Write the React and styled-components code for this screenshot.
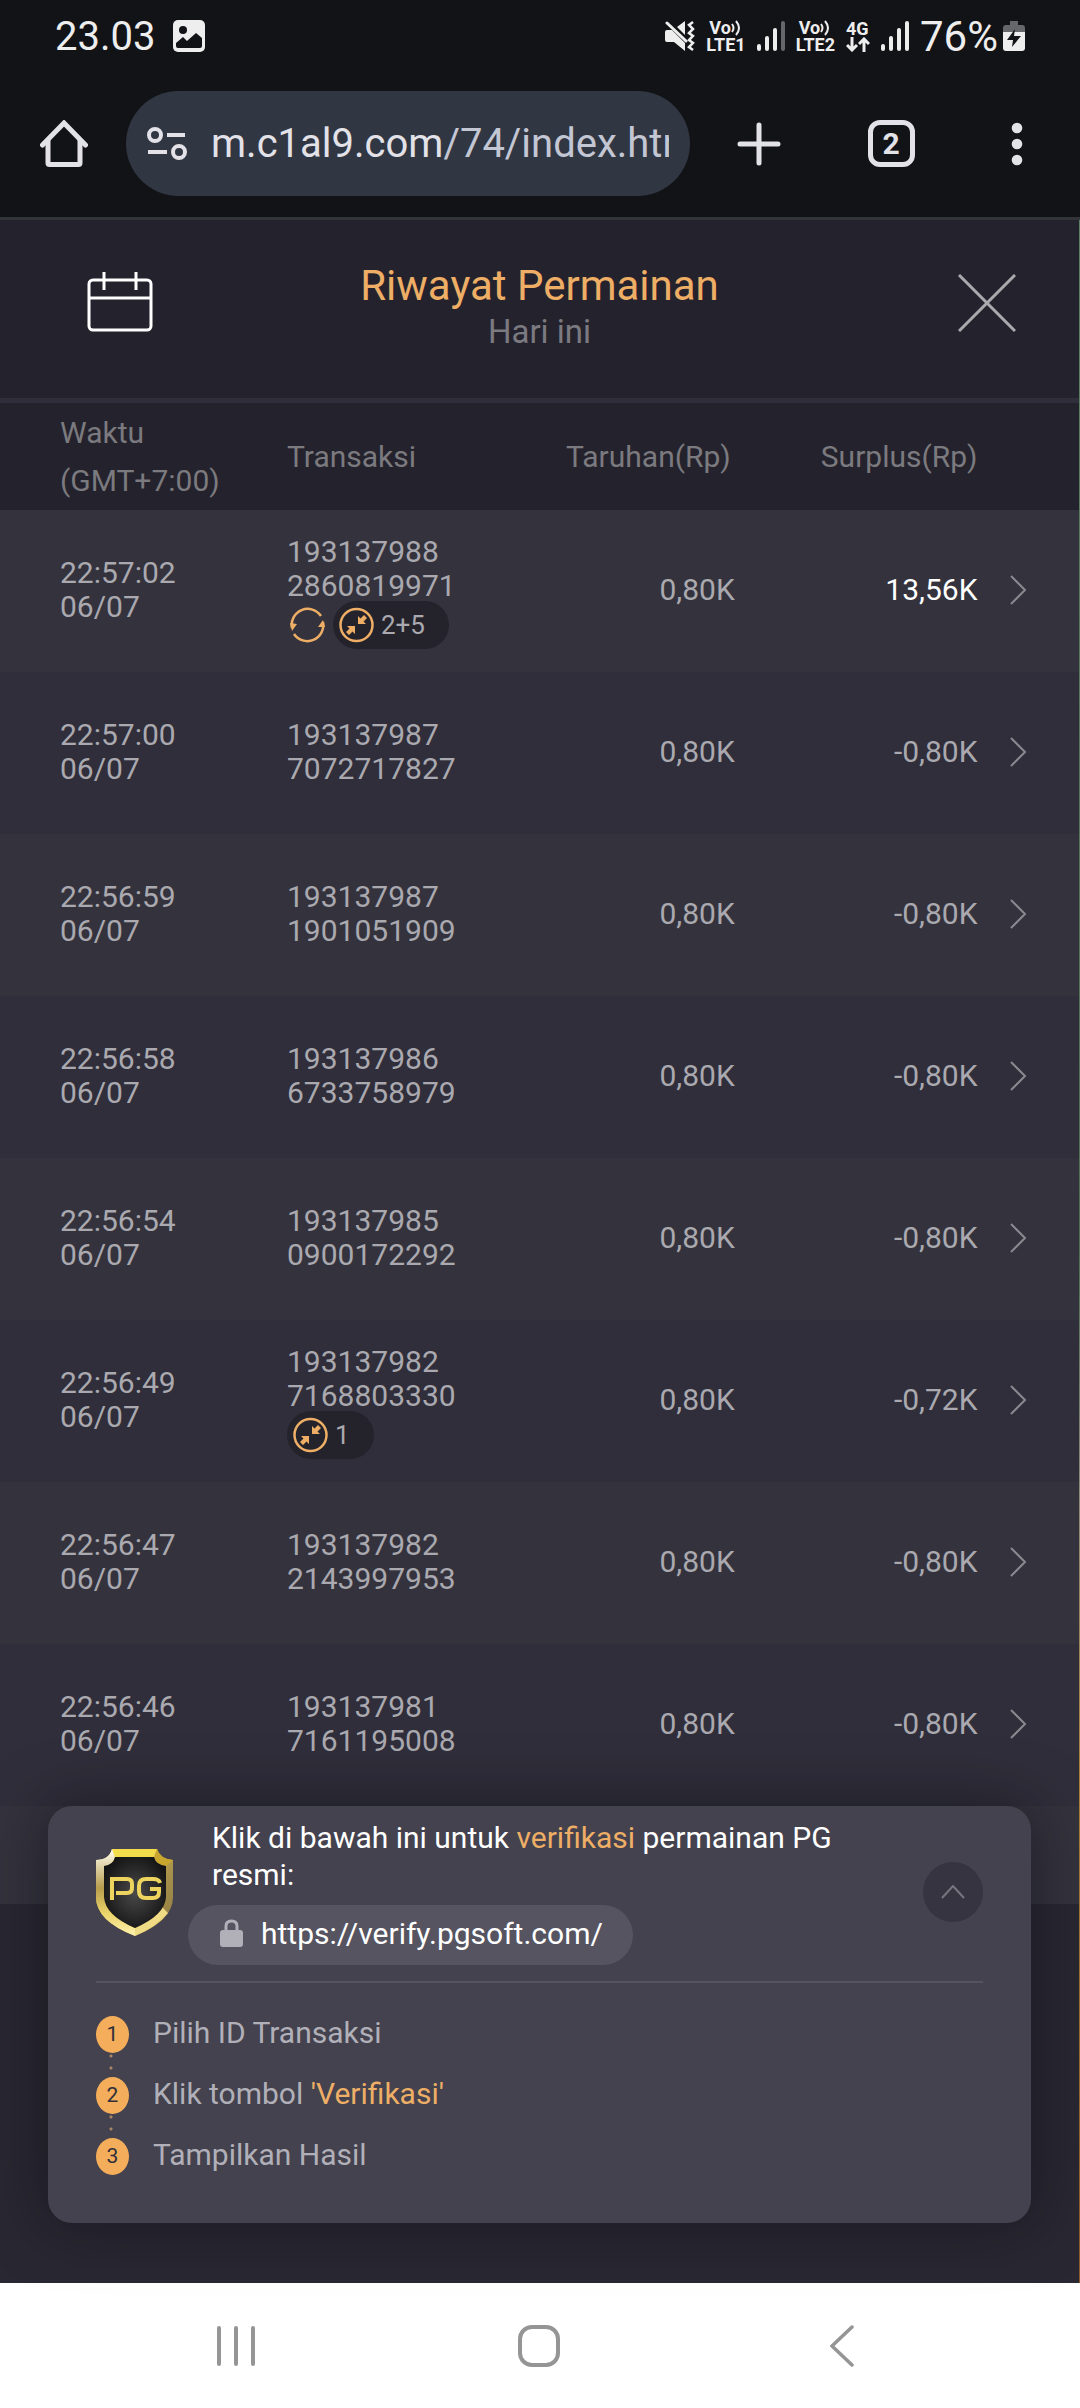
import { useState } from "react";
import styled, { createGlobalStyle } from "styled-components";

const GlobalStyle = createGlobalStyle`
  * {
    box-sizing: border-box;
  }

  body {
    margin: 0;
    background: #ffffff;
    font-family: Roboto, "Liberation Sans", sans-serif;
  }

  button {
    display: flex;
    align-items: center;
    justify-content: center;
    padding: 0;
    border: none;
    background: none;
    color: inherit;
    font: inherit;
    cursor: pointer;
  }

  svg {
    display: block;
    flex: none;
  }
`;

const Screen = styled.div`
  display: flex;
  flex-direction: column;
  min-height: 100vh;
`;

const StatusBar = styled.div`
  display: flex;
  align-items: center;
  justify-content: space-between;
  height: 72px;
  padding: 0 55px;
  background: #121317;
  color: #eeeeee;
  font-size: 40px;
`;

const StatusGroup = styled.div`
  display: flex;
  align-items: center;
  gap: ${(props) => props.$gap}px;
`;

const BatteryLevel = styled.span`
  font-size: 42px;
`;

const Network = styled.div`
  display: flex;
  flex-direction: column;
  font-size: 18px;
  line-height: 17px;
  font-weight: 700;
`;

const Volte = styled.span`
  display: flex;
  align-items: center;
  padding-left: 3px;
`;

const Toolbar = styled.header`
  display: flex;
  align-items: center;
  height: 148px;
  padding: 0 48px 2px 32px;
  border-bottom: 3px solid #333438;
  background: #121317;
  color: #e3e2e8;
`;

const AddressBar = styled.div`
  display: flex;
  align-items: center;
  flex: 1;
  height: 105px;
  min-width: 0;
  margin-left: 30px;
  margin-right: 37px;
  padding: 0 21px;
  border-radius: 53px;
  background: #313643;
`;

const Address = styled.div`
  flex: 1;
  margin-left: 24px;
  overflow: hidden;
  white-space: nowrap;
  font-size: 40px;
  line-height: 54px;
`;

const AddressPath = styled.span`
  color: #c3c6d3;
`;

const ToolButton = styled.button`
  width: 64px;
  height: 64px;
  margin-right: ${(props) => props.$after || 0}px;
`;

const TabCount = styled.span`
  display: flex;
  align-items: center;
  justify-content: center;
  width: 47px;
  height: 47px;
  border: 5px solid #e3e2e8;
  border-radius: 12px;
  font-size: 30px;
  font-weight: 700;
`;

const Page = styled.div`
  display: flex;
  flex: 1;
  background: #292832;
`;

// sliver of the game that stays visible beside the page
const GameEdge = styled.div`
  width: 1px;
  background: linear-gradient(#5d8068, #4f6f55 50%, #8d8a7a 62%, #a98137 76%, #8a5a2c);
`;

const Content = styled.main`
  display: flex;
  flex-direction: column;
  flex: 1;
  min-width: 0;
`;

const PageHeader = styled.div`
  display: flex;
  justify-content: space-between;
  height: 183px;
  padding: 0 60px;
  border-bottom: 5px solid #2f2e3a;
  background: #24232d;
`;

const CalendarButton = styled.button`
  width: 120px;
  height: 164px;
`;

const CloseButton = styled.button`
  width: 64px;
  height: 166px;
  margin-left: 56px;
`;

const Heading = styled.div`
  padding-top: 42px;
  text-align: center;
`;

const Title = styled.h1`
  margin: 0;
  color: #eeae66;
  font-size: 42px;
  line-height: 48px;
  font-weight: 400;
`;

const Subtitle = styled.p`
  margin: 0;
  color: #7b7a81;
  font-size: 33px;
  line-height: 44px;
`;

const History = styled.table`
  width: 100%;
  border-collapse: collapse;
  table-layout: fixed;
  font-size: 30px;
  line-height: 34px;
`;

const Column = styled.col`
  width: ${(props) => props.$width};
`;

const HeadCell = styled.th`
  height: 107px;
  padding: 0 ${(props) => props.$inset || 0}px 0 ${(props) => (props.$first ? 60 : 0)}px;
  background: #24232d;
  color: #7b7a7f;
  font-size: 30px;
  line-height: 48px;
  font-weight: 400;
  text-align: ${(props) => (props.$right ? "right" : "left")};
`;

const Row = styled.tr`
  background: #2f2e3a;

  &:nth-child(odd) {
    background: #34333d;
  }
`;

const Cell = styled.td`
  height: 162px;
  padding: 0 0 3px ${(props) => (props.$first ? 60 : 0)}px;
  color: ${(props) => (props.$win ? "#ffffff" : "#aaa9af")};
  text-align: ${(props) => (props.$right ? "right" : "left")};
`;

const Badges = styled.div`
  display: flex;
  align-items: center;
  gap: 8px;
  margin: -2px 0 -5px;
`;

const SpinMark = styled.span`
  padding-left: 3px;
`;

const Multiplier = styled.span`
  display: flex;
  align-items: center;
  gap: 7px;
  height: 48px;
  padding: 0 24px 0 6px;
  border-radius: 24px;
  background: #24232b;
  font-size: 26px;
`;

const RowButton = styled.button`
  width: 40px;
  height: 60px;
  margin-left: 20px;
`;

const NextRow = styled.div`
  height: 98px;
  background: #34333d;
`;

const VerifyCard = styled.section`
  position: relative;
  margin: -98px 48px 60px;
  padding: 0 48px 15px;
  border-radius: 24px;
  background: #43424e;
  box-shadow: 0 0 60px rgba(10, 10, 15, 0.5);
  color: #ffffff;
  font-size: 30px;
`;

const CardTop = styled.div`
  display: flex;
  align-items: flex-start;
  height: 177px;
  border-bottom: 2px solid #54535f;
`;

const Shield = styled.div`
  padding-top: 43px;
`;

const CardText = styled.div`
  flex: 1;
  padding: 13px 60px 0 15px;
`;

const Prompt = styled.p`
  margin: 0;
  padding-left: 24px;
  line-height: 37px;
`;

const Accent = styled.span`
  color: #eeae66;
`;

const VerifyLink = styled.a`
  display: inline-flex;
  align-items: center;
  gap: 18px;
  height: 60px;
  margin-top: 12px;
  padding: 0 30px 4px 32px;
  border-radius: 30px;
  background: #555460;
  color: #ffffff;
  text-decoration: none;
`;

const CollapseButton = styled.button`
  width: 60px;
  height: 60px;
  margin-top: 56px;
  border-radius: 50%;
  background: #353440;
`;

const Steps = styled.ol`
  display: flex;
  flex-direction: column;
  gap: 24px;
  margin: 0;
  padding: 33px 0;
  list-style: none;
`;

const Step = styled.li`
  position: relative;
  display: flex;
  align-items: center;
  gap: 24px;
  height: 37px;
  color: #b1b0b8;

  &:not(:last-child)::after {
    content: "";
    position: absolute;
    left: 13px;
    top: 34px;
    width: 4px;
    height: 24px;
    background: radial-gradient(circle, #a98467 1px, transparent 2px) 0 0 / 4px 12px;
  }
`;

const StepNumber = styled.span`
  width: 33px;
  height: 37px;
  border-radius: 50%;
  background: #f4ad5a;
  color: #30303a;
  font-size: 21px;
  line-height: 36px;
  text-align: center;
`;

const StepText = styled.span`
  padding-bottom: 4px;
`;

const NavBar = styled.nav`
  display: flex;
  justify-content: space-between;
  align-items: center;
  height: 126px;
  padding: 0 190px 0 188px;
  background: #ffffff;
  color: #959595;
`;

const NavButton = styled.button`
  width: 96px;
  height: 96px;
`;

const rows = [
  { time: "22:57:02", id: ["193137988", "2860819971"], win: "13,56K", spin: true, multiplier: "2+5" },
  { time: "22:57:00", id: ["193137987", "7072717827"], win: "-0,80K" },
  { time: "22:56:59", id: ["193137987", "1901051909"], win: "-0,80K" },
  { time: "22:56:58", id: ["193137986", "6733758979"], win: "-0,80K" },
  { time: "22:56:54", id: ["193137985", "0900172292"], win: "-0,80K" },
  { time: "22:56:49", id: ["193137982", "7168803330"], win: "-0,72K", multiplier: "1" },
  { time: "22:56:47", id: ["193137982", "2143997953"], win: "-0,80K" },
  { time: "22:56:46", id: ["193137981", "7161195008"], win: "-0,80K" },
];

const PictureIcon = () => (
  <svg width="32" height="32" viewBox="0 0 32 32">
    <rect width="32" height="32" rx="5" fill="#eeeeee" />
    <circle cx="10" cy="10" r="4" fill="#121317" />
    <path d="M3 23L10 17L14 21L23 13L29 18V26Q29 28 27 28H5Q3 28 3 26Z" fill="#121317" />
  </svg>
);

const MuteIcon = () => (
  <svg width="30" height="30" viewBox="0 0 30 30">
    <path d="M2 9H7L20 22V30L9 21H2Q0 21 0 19V11Q0 9 2 9ZM12 6L20 0V14Z" fill="#eeeeee" />
    <path d="M2 2L21 20" stroke="#eeeeee" strokeWidth="3" strokeLinecap="round" />
    <path
      d="M28 1L24 4L28 8L24 12L28 15L24 19L28 22L24 26L28 29"
      fill="none"
      stroke="#eeeeee"
      strokeWidth="2.5"
    />
  </svg>
);

const WavesIcon = () => (
  <svg width="10" height="16" viewBox="0 0 10 16" fill="none" stroke="#eeeeee" strokeWidth="2">
    <path d="M1 4Q4 8 1 12M5 1Q11 8 5 15" />
  </svg>
);

const SignalIcon = ({ weak }) => (
  <svg width="28" height="30" viewBox="0 0 28 30" stroke="#eeeeee" strokeWidth="4" strokeLinecap="round">
    <path d="M2 25V28M10 17V28M18 9V28" />
    <path d="M26 2V28" stroke={weak ? "#66676a" : "#eeeeee"} />
  </svg>
);

const DataArrowsIcon = () => (
  <svg width="24" height="15" viewBox="0 0 24 15" fill="none" stroke="#eeeeee" strokeWidth="3">
    <path d="M6 0V13M1 8L6 13L11 8M18 15V2M13 7L18 2L23 7" />
  </svg>
);

const BatteryIcon = () => (
  <svg width="22" height="30" viewBox="0 0 22 30">
    <path d="M7 0H15V4H19Q22 4 22 7V12H0V7Q0 4 3 4H7Z" fill="#66676a" />
    <path d="M0 11H22V27Q22 30 19 30H3Q0 30 0 27Z" fill="#eeeeee" />
    <path d="M12 8L4 19H10L9 26L18 15H11Z" fill="#121317" />
  </svg>
);

const HomeIcon = () => (
  <svg width="48" height="48" viewBox="0 0 48 48" fill="none" stroke="currentColor" strokeWidth="5">
    <path d="M2.5 25L24 3L45.5 25" strokeLinecap="round" />
    <path d="M8 20V43Q8 44.5 9.5 44.5H38.5Q40 44.5 40 43V20" />
  </svg>
);

const SiteInfoIcon = () => (
  <svg width="40" height="34" viewBox="0 0 40 34" fill="none" stroke="#e3e2e8" strokeWidth="4">
    <circle cx="8" cy="8" r="6" />
    <path d="M20 8H38M1 25H20" />
    <circle cx="32" cy="25" r="6" />
  </svg>
);

const PlusIcon = () => (
  <svg width="44" height="44" viewBox="0 0 44 44" stroke="currentColor" strokeWidth="5" strokeLinecap="round">
    <path d="M22 3V41M3 22H41" />
  </svg>
);

const MoreIcon = () => (
  <svg width="12" height="44" viewBox="0 0 12 44" fill="currentColor">
    <circle cx="6" cy="6" r="5.3" />
    <circle cx="6" cy="22" r="5.3" />
    <circle cx="6" cy="38" r="5.3" />
  </svg>
);

const CalendarIcon = () => (
  <svg width="66" height="60" viewBox="0 0 66 60" fill="none" stroke="#ffffff" strokeWidth="3">
    <rect x="2" y="8" width="62" height="50" rx="4" />
    <path d="M2 26H64M17 0V18M49 0V18" />
  </svg>
);

const CloseIcon = () => (
  <svg width="58" height="58" viewBox="0 0 58 58" stroke="#aaa9ae" strokeWidth="3">
    <path d="M1 1L57 57M57 1L1 57" />
  </svg>
);

const SpinIcon = () => (
  <svg width="35" height="36" viewBox="0 0 35 36" fill="none" stroke="#eeae66" strokeWidth="2.5">
    <path d="M2 21A16 16 0 0 1 31 9" />
    <path d="M33 15A16 16 0 0 1 4 27" />
    <path d="M0 16L7 17L2 24ZM35 20L28 20L33 13Z" fill="#eeae66" stroke="none" />
  </svg>
);

const CollapseMarkIcon = () => (
  <svg width="35" height="36" viewBox="0 0 35 36">
    <circle cx="17.5" cy="18" r="16" fill="none" stroke="#eeae66" strokeWidth="2.5" />
    <path
      d="M19 9V17H27L24.5 14.5L28 11L25 8L21.5 11.5ZM16 27V19H8L10.5 21.5L7 25L10 28L13.5 24.5Z"
      fill="#eeae66"
    />
  </svg>
);

const ChevronIcon = () => (
  <svg width="18" height="30" viewBox="0 0 18 30" fill="none" stroke="#8a898f" strokeWidth="2">
    <path d="M2 1L16 15L2 29" />
  </svg>
);

const ShieldLogo = () => (
  <svg width="77" height="87" viewBox="0 0 77 87">
    <defs>
      <linearGradient id="gold" x1="0" y1="0" x2="1" y2="1">
        <stop offset="0" stopColor="#fff6d8" />
        <stop offset="0.3" stopColor="#e9cf4a" />
        <stop offset="0.6" stopColor="#a8914a" />
        <stop offset="1" stopColor="#8f7b45" />
      </linearGradient>
      <linearGradient id="side" x1="0" y1="0" x2="0" y2="1">
        <stop offset="0" stopColor="#fffdf0" />
        <stop offset="0.45" stopColor="#b79d4c" />
        <stop offset="0.75" stopColor="#ecd56c" />
        <stop offset="1" stopColor="#fff3b0" />
      </linearGradient>
      <radialGradient id="plate" cx="0.5" cy="0.5" r="0.55">
        <stop offset="0" stopColor="#4a4a4a" />
        <stop offset="1" stopColor="#151515" />
      </radialGradient>
    </defs>
    <path
      d="M16 0H61Q64 10 77 11V48Q77 72 39 87Q0 72 0 48V11Q13 11 16 0Z"
      fill="url(#gold)"
    />
    <path d="M0 11Q13 11 16 0L19 8Q17 15 8 18V48Q9 66 39 79V87Q0 72 0 48Z" fill="url(#side)" />
    <path d="M16 0H61L58 8H19Z" fill="#f3dc4c" />
    <path d="M61 0Q64 10 77 11L70 17Q61 16 58 8Z" fill="#c9a62e" />
    <path d="M39 79Q58 70 66 58L72 64Q61 78 39 87Z" fill="#f0dc84" />
    <path
      d="M19 8H58Q60 16 70 17V48Q69 66 39 79Q9 66 8 48V17Q17 16 19 8Z"
      fill="url(#plate)"
    />
    <path
      d="M16 51V30H31Q36 30 36 35V39Q36 44 31 44H20M64 34Q63 30 57 30H50Q43 30 43 37V42Q43 49 50 49H57Q63 49 63 43V40H54"
      fill="none"
      stroke="#ecd45e"
      strokeWidth="4"
    />
  </svg>
);

const LockIcon = () => (
  <svg width="23" height="28" viewBox="0 0 23 28">
    <path d="M6 13V7Q6 2 11.5 2Q17 2 17 7V13" fill="none" stroke="#b1b0b8" strokeWidth="3" />
    <rect y="11" width="23" height="17" rx="3" fill="#b1b0b8" />
  </svg>
);

const UpIcon = () => (
  <svg width="24" height="14" viewBox="0 0 24 14" fill="none" stroke="#77767f" strokeWidth="2">
    <path d="M1 13L12 1L23 13" />
  </svg>
);

const RecentsIcon = () => (
  <svg width="38" height="42" viewBox="0 0 38 42" stroke="currentColor" strokeWidth="4" strokeLinecap="round">
    <path d="M2 3V39M19 3V39M36 3V39" />
  </svg>
);

const NavHomeIcon = () => (
  <svg width="42" height="42" viewBox="0 0 42 42" fill="none" stroke="currentColor" strokeWidth="4">
    <rect x="2" y="2" width="38" height="38" rx="12" />
  </svg>
);

const BackIcon = () => (
  <svg width="24" height="42" viewBox="0 0 24 42" fill="none" stroke="currentColor" strokeWidth="3.5">
    <path d="M22 2L2 21L22 40" strokeLinecap="round" />
  </svg>
);

const HistoryRow = ({ row }) => (
  <Row>
    <Cell $first>
      {row.time}
      <br />
      06/07
    </Cell>
    <Cell>
      {row.id[0]}
      <br />
      {row.id[1]}
      {row.multiplier && (
        <Badges>
          {row.spin && (
            <SpinMark>
              <SpinIcon />
            </SpinMark>
          )}
          <Multiplier>
            <CollapseMarkIcon />
            {row.multiplier}
          </Multiplier>
        </Badges>
      )}
    </Cell>
    <Cell $right>0,80K</Cell>
    <Cell $right $win={!row.win.startsWith("-")}>
      {row.win}
    </Cell>
    <Cell>
      <RowButton aria-label={`Detail ${row.time}`}>
        <ChevronIcon />
      </RowButton>
    </Cell>
  </Row>
);

const App = () => {
  const [open, setOpen] = useState(true);

  return (
    <Screen>
      <GlobalStyle />
      <StatusBar>
        <StatusGroup $gap={18}>
          <span>23.03</span>
          <PictureIcon />
        </StatusGroup>
        <StatusGroup $gap={11}>
          <MuteIcon />
          <Network>
            <Volte>
              Vo
              <WavesIcon />
            </Volte>
            <span>LTE1</span>
          </Network>
          <SignalIcon weak />
          <Network>
            <Volte>
              Vo
              <WavesIcon />
            </Volte>
            <span>LTE2</span>
          </Network>
          <Network>
            <span>4G</span>
            <DataArrowsIcon />
          </Network>
          <SignalIcon />
          <StatusGroup $gap={5}>
            <BatteryLevel>76%</BatteryLevel>
            <BatteryIcon />
          </StatusGroup>
        </StatusGroup>
      </StatusBar>

      <Toolbar>
        <ToolButton aria-label="Home">
          <HomeIcon />
        </ToolButton>
        <AddressBar>
          <SiteInfoIcon />
          <Address>
            m.c1al9.com<AddressPath>/74/index.html</AddressPath>
          </Address>
        </AddressBar>
        <ToolButton $after={68} aria-label="New tab">
          <PlusIcon />
        </ToolButton>
        <ToolButton $after={62} aria-label="Tabs">
          <TabCount>2</TabCount>
        </ToolButton>
        <ToolButton aria-label="Menu" $after={-17}>
          <MoreIcon />
        </ToolButton>
      </Toolbar>

      <Page>
        <Content>
          <PageHeader>
            <CalendarButton aria-label="Kalender">
              <CalendarIcon />
            </CalendarButton>
            <Heading>
              <Title>Riwayat Permainan</Title>
              <Subtitle>Hari ini</Subtitle>
            </Heading>
            <CloseButton aria-label="Tutup">
              <CloseIcon />
            </CloseButton>
          </PageHeader>

          <History>
            <colgroup>
              <Column $width="26.6%" />
              <Column $width="22%" />
              <Column $width="19.5%" />
              <Column $width="22.5%" />
              <Column />
            </colgroup>
            <thead>
              <tr>
                <HeadCell $first>
                  Waktu
                  <br />
                  (GMT+7:00)
                </HeadCell>
                <HeadCell>Transaksi</HeadCell>
                <HeadCell $right $inset={4}>
                  Taruhan(Rp)
                </HeadCell>
                <HeadCell $right>Surplus(Rp)</HeadCell>
                <HeadCell />
              </tr>
            </thead>
            <tbody>
              {rows.map((row) => (
                <HistoryRow key={row.time} row={row} />
              ))}
            </tbody>
          </History>
          <NextRow />

          <VerifyCard>
            <CardTop>
              <Shield>
                <ShieldLogo />
              </Shield>
              <CardText>
                <Prompt>
                  Klik di bawah ini untuk <Accent>verifikasi</Accent> permainan PG
                  <br />
                  resmi:
                </Prompt>
                <VerifyLink href="https://verify.pgsoft.com/">
                  <LockIcon />
                  https://verify.pgsoft.com/
                </VerifyLink>
              </CardText>
              <CollapseButton aria-label="Ciutkan" aria-expanded={open} onClick={() => setOpen(!open)}>
                <UpIcon />
              </CollapseButton>
            </CardTop>
            {open && (
              <Steps>
                <Step>
                  <StepNumber>1</StepNumber>
                  <StepText>Pilih ID Transaksi</StepText>
                </Step>
                <Step>
                  <StepNumber>2</StepNumber>
                  <StepText>
                    Klik tombol <Accent>'Verifikasi'</Accent>
                  </StepText>
                </Step>
                <Step>
                  <StepNumber>3</StepNumber>
                  <StepText>Tampilkan Hasil</StepText>
                </Step>
              </Steps>
            )}
          </VerifyCard>
        </Content>
        <GameEdge />
      </Page>

      <NavBar>
        <NavButton aria-label="Recents">
          <RecentsIcon />
        </NavButton>
        <NavButton aria-label="Home screen">
          <NavHomeIcon />
        </NavButton>
        <NavButton aria-label="Back">
          <BackIcon />
        </NavButton>
      </NavBar>
    </Screen>
  );
};

export default App;
